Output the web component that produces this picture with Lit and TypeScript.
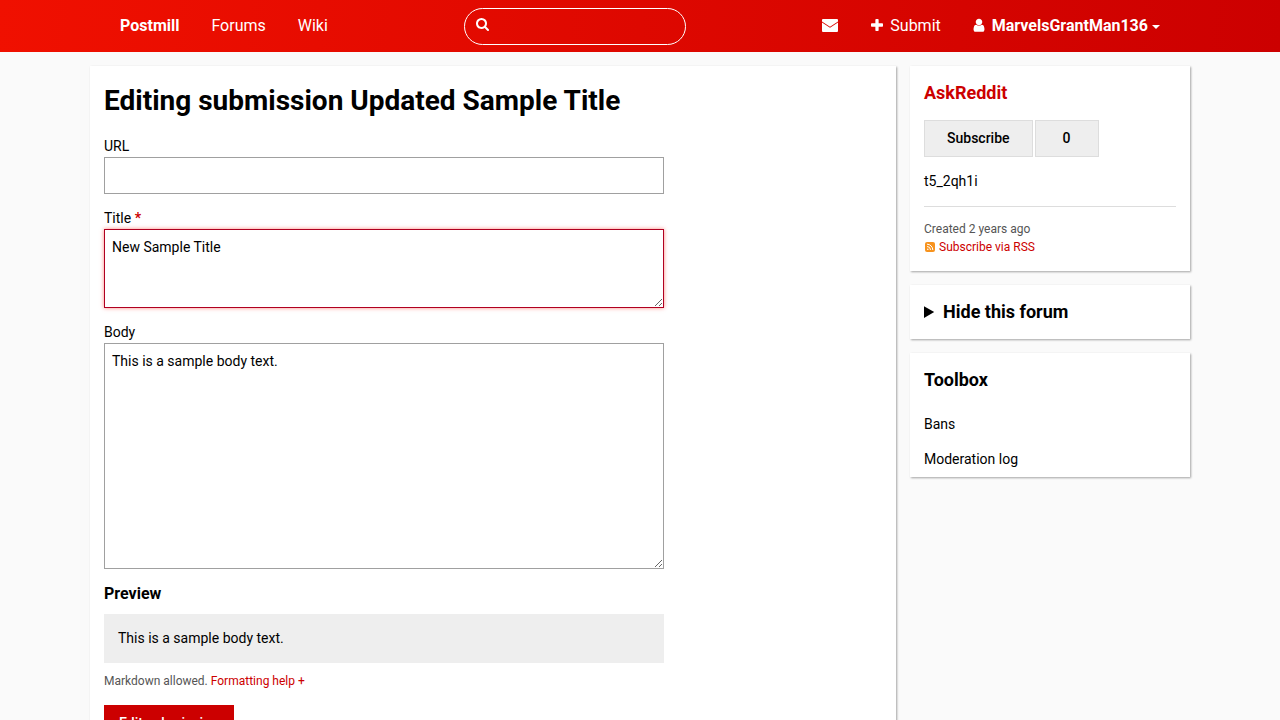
import { LitElement, html, css, svg } from "lit";
import { customElement, state } from "lit/decorators.js";

const paths = {
  search:
    "M1216 832q0-185-131.5-316.5t-316.5-131.5-316.5 131.5-131.5 316.5 131.5 316.5 316.5 131.5 316.5-131.5 131.5-316.5zm512 832q0 52-38 90t-90 38q-54 0-90-38l-343-342q-179 124-399 124-143 0-273.5-55.5t-225-150-150-225-55.5-273.5 55.5-273.5 150-225 225-150 273.5-55.5 273.5 55.5 225 150 150 225 55.5 273.5q0 220-124 399l343 343q37 37 37 90z",
  plus:
    "M1600 736v192q0 40-28 68t-68 28h-416v416q0 40-28 68t-68 28h-192q-40 0-68-28t-28-68v-416h-416q-40 0-68-28t-28-68v-192q0-40 28-68t68-28h416v-416q0-40 28-68t68-28h192q40 0 68 28t28 68v416h416q40 0 68 28t28 68z",
  user:
    "M1536 1399q0 109-62.5 187t-150.5 78h-854q-88 0-150.5-78t-62.5-187q0-85 8.5-160.5t31.5-152 58.5-131 94-89 134.5-34.5q131 128 313 128t313-128q76 0 134.5 34.5t94 89 58.5 131 31.5 152 8.5 160.5zm-256-887q0 159-112.5 271.5t-271.5 112.5-271.5-112.5-112.5-271.5 112.5-271.5 271.5-112.5 271.5 112.5 112.5 271.5z",
};

@customElement("site-header")
export class SiteHeader extends LitElement {
  static styles = css`
    :host {
      display: block;
      background: linear-gradient(95deg, #f01000, #c00);
      color: #fff;
      font-size: 16px;
      line-height: 24px;
    }
    .bar {
      display: flex;
      align-items: center;
      justify-content: space-between;
      max-width: 1072px;
      margin: 0 auto;
    }
    nav {
      display: flex;
    }
    a {
      display: flex;
      align-items: center;
      padding: 14px 16px;
      color: inherit;
      text-decoration: none;
    }
    a svg {
      margin-bottom: 2px;
    }
    .strong {
      font-weight: 700;
    }
    .search {
      display: flex;
      box-sizing: border-box;
      width: 222px;
      height: 37px;
      margin-top: 1px;
      padding: 0 11px;
      border: 1px solid #fff;
      border-radius: 19px;
    }
    .search svg {
      flex: none;
      margin-top: 9px;
    }
    input {
      min-width: 0;
      flex: 1;
      padding: 0 8px;
      border: 0;
      outline: 0;
      background: transparent;
      color: inherit;
      font: inherit;
    }
    svg {
      display: block;
      fill: currentColor;
    }
    .gap {
      margin-right: 7px;
    }
    .caret {
      margin: 2px 0 0 4px;
      border: 4px solid transparent;
      border-top-color: currentColor;
      border-bottom: 0;
    }
  `;

  render() {
    return html`
      <header class="bar">
        <nav aria-label="Site">
          <a class="strong" href="#">Postmill</a>
          <a href="#forums">Forums</a>
          <a href="#wiki">Wiki</a>
        </nav>
        <form class="search" role="search">
          <svg width="13" height="13" viewBox="64 128 1664 1664"><path d=${paths.search}></path></svg>
          <input type="search" aria-label="Search" />
        </form>
        <nav aria-label="User">
          <a href="#messages" aria-label="Messages">
            <svg width="17" height="14" viewBox="0 0 17 14">
              <path d="M1 1h14q1 0 1 1v1.500L8 8.800 0 3.500V2q0-1 1-1zM0 4.500l8 5.300 8-5.300V13q0 1-1 1H1q-1 0-1-1z"></path>
            </svg>
          </a>
          <a href="#submit">
            <svg class="gap" width="12" height="12" viewBox="192 128 1408 1408"><path d=${paths.plus}></path></svg>
            Submit
          </a>
          <a class="strong" href="#user">
            <svg class="gap" width="12" height="14" viewBox="192 64 1408 1600"><path d=${paths.user}></path></svg>
            MarvelsGrantMan136
            <span class="caret"></span>
          </a>
        </nav>
      </header>
    `;
  }
}

@customElement("submission-form")
export class SubmissionForm extends LitElement {
  static styles = css`
    :host {
      display: block;
    }
    form {
      display: flex;
      flex-direction: column;
      align-items: flex-start;
      gap: 14px;
      max-width: 560px;
    }
    h1,
    h2,
    p {
      margin: 0;
    }
    h1 {
      margin-bottom: 14px;
      font-size: 28px;
      line-height: 42px;
    }
    h2 {
      margin-bottom: 9px;
      font-size: 16px;
      line-height: 22px;
    }
    .field {
      width: 100%;
    }
    label {
      display: block;
    }
    .required {
      color: #c00;
      font-weight: 700;
    }
    .control {
      display: block;
      box-sizing: border-box;
      width: 100%;
      padding: 7px;
      border: 1px solid #a0a0a0;
      border-radius: 0;
      outline: 0;
      background: #fff;
      color: #000;
      font: inherit;
      resize: vertical;
    }
    input.control {
      height: 37px;
    }
    .active {
      border-color: #b00020;
      box-shadow: 0 0 4px rgba(255, 17, 0, 0.5);
    }
    .preview {
      padding: 14px;
      background: #eee;
    }
    .help {
      margin: 9px 0 1px;
      color: #555;
      font-size: 12px;
      line-height: 18px;
    }
    a {
      color: #c00;
      text-decoration: none;
    }
    button {
      padding: 7px 14px;
      border: 1px solid #c00;
      background: #c00;
      color: #fff;
      font: inherit;
      font-weight: 500;
    }
  `;

  @state() private body = "This is a sample body text.";

  private onBody(e: InputEvent) {
    this.body = (e.target as HTMLTextAreaElement).value;
  }

  render() {
    return html`
      <h1>Editing submission Updated Sample Title</h1>
      <form>
        <div class="field">
          <label for="url">URL</label>
          <input id="url" class="control" type="url" />
        </div>
        <div class="field">
          <label for="title">Title <span class="required">*</span></label>
          <textarea id="title" class="control active" rows="3" required .value=${"New Sample Title"}></textarea>
        </div>
        <div class="field">
          <label for="body">Body</label>
          <textarea id="body" class="control" rows="10" .value=${this.body} @input=${this.onBody}></textarea>
        </div>
        <div class="field">
          <h2>Preview</h2>
          <p class="preview">${this.body}</p>
          <p class="help">Markdown allowed. <a href="#help">Formatting help +</a></p>
        </div>
        <button type="submit">Edit submission</button>
      </form>
    `;
  }
}

@customElement("forum-sidebar")
export class ForumSidebar extends LitElement {
  static styles = css`
    :host {
      display: flex;
      flex-direction: column;
      gap: 14px;
    }
    section {
      padding: 14px;
      background: #fff;
      box-shadow: 1px 1px 2px rgba(0, 0, 0, 0.35);
    }
    h2,
    p {
      margin: 0;
    }
    h2,
    summary {
      font-size: 18px;
      font-weight: 700;
      line-height: 26px;
    }
    a {
      color: #c00;
      text-decoration: none;
    }
    .subscribe {
      display: flex;
      gap: 2px;
      margin: 14px 0;
    }
    .subscribe > * {
      box-sizing: border-box;
      padding: 7px 22px;
      border: 1px solid #ddd;
      background: #eee;
      color: #000;
      font: inherit;
      font-weight: 500;
    }
    .count {
      min-width: 64px;
      text-align: center;
    }
    .meta {
      margin-top: 14px;
      padding: 13px 0 1px;
      border-top: 1px solid #ddd;
      color: #555;
      font-size: 12px;
      line-height: 18px;
    }
    .rss {
      display: flex;
      align-items: center;
      gap: 3px;
    }
    .toolbox {
      padding-bottom: 0;
    }
    ul {
      margin: 14px 0 0;
      padding: 0;
      list-style: none;
    }
    li a {
      display: block;
      padding: 7px 0;
      color: #000;
    }
  `;

  private rssIcon = svg`
    <svg width="12" height="12" viewBox="0 0 12 12" fill="none">
      <rect x="1" y="1" width="10" height="10" rx="2" fill="#f7931e"></rect>
      <path d="M3 5.500a3.500 3.500 0 0 1 3.500 3.500M3 3.200A5.800 5.800 0 0 1 8.800 9" stroke="#fff"></path>
      <circle cx="3.800" cy="8.300" r=".8" fill="#fff"></circle>
    </svg>`;

  render() {
    return html`
      <section>
        <h2><a href="#askreddit">AskReddit</a></h2>
        <div class="subscribe">
          <button type="button">Subscribe</button>
          <span class="count">0</span>
        </div>
        <p>t5_2qh1i</p>
        <div class="meta">
          <p>Created 2 years ago</p>
          <a class="rss" href="#rss">${this.rssIcon}Subscribe via RSS</a>
        </div>
      </section>
      <section>
        <details>
          <summary>Hide this forum</summary>
        </details>
      </section>
      <section class="toolbox">
        <h2>Toolbox</h2>
        <ul>
          <li><a href="#bans">Bans</a></li>
          <li><a href="#log">Moderation log</a></li>
        </ul>
      </section>
    `;
  }
}

@customElement("app-root")
export class AppRoot extends LitElement {
  static styles = css`
    :host {
      display: block;
      min-height: 100vh;
      background: #fafafa;
      color: #000;
      font-family: Roboto, "Liberation Sans", sans-serif;
      font-size: 14px;
      line-height: 21px;
    }
    .columns {
      display: grid;
      grid-template-columns: minmax(0, 1fr) 280px;
      gap: 14px;
      align-items: start;
      max-width: 1100px;
      margin: 0 auto;
      padding: 14px 0;
    }
    .card {
      padding: 14px;
      background: #fff;
      box-shadow: 1px 1px 2px rgba(0, 0, 0, 0.35);
    }
  `;

  render() {
    return html`
      <site-header></site-header>
      <div class="columns">
        <main class="card"><submission-form></submission-form></main>
        <aside><forum-sidebar></forum-sidebar></aside>
      </div>
    `;
  }
}
